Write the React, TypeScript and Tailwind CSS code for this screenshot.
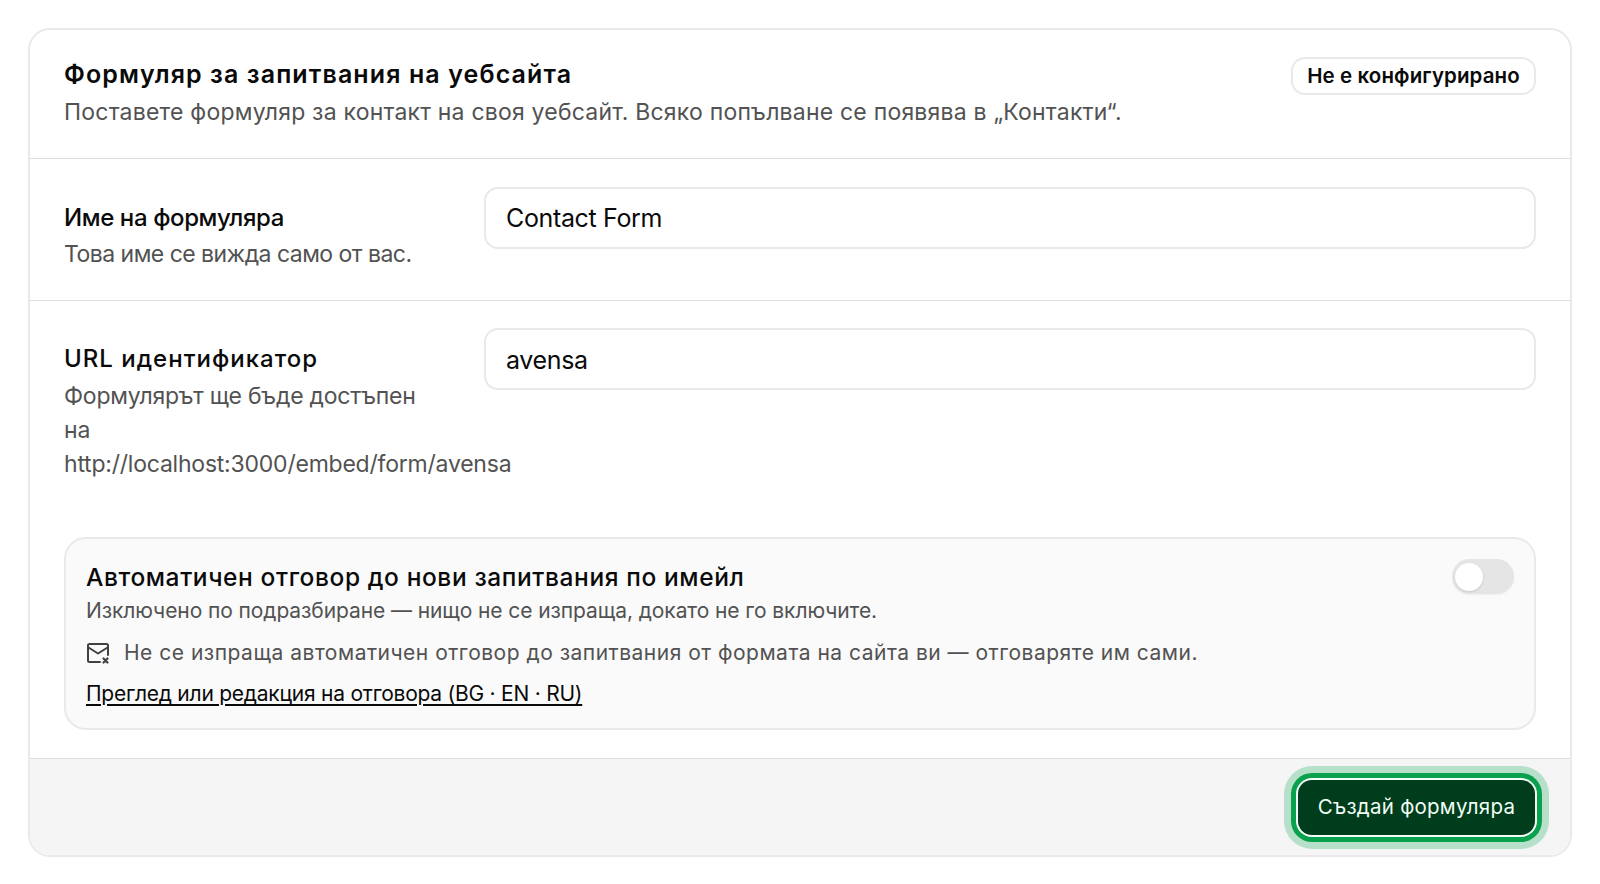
import { useState } from 'react';
import type { ReactNode } from 'react';

type FieldRowProps = {
  label: ReactNode;
  hint: ReactNode;
  children: ReactNode;
};

const inputClass =
  'h-[62px] w-full rounded-[14px] border-2 border-[#e9e9e9] bg-white px-5 text-[25px] tracking-[-0.35px] text-neutral-950 outline-none';

const MailXIcon = () => (
  <svg
    viewBox="0 0 24 24"
    className="h-6 w-6 shrink-0 text-neutral-700"
    fill="none"
    stroke="currentColor"
    strokeWidth="2"
    strokeLinecap="round"
    strokeLinejoin="round"
  >
    <path d="M14 21H3.500A1.500 1.500 0 0 1 2 19.500V4.500A1.500 1.500 0 0 1 3.500 3h17A1.500 1.500 0 0 1 22 4.500V14" />
    <path d="m2.500 6.500 9.500 6 9.500-6" />
    <path d="m17.500 17.500 4 4M21.500 17.500l-4 4" strokeWidth="2.200" />
  </svg>
);

const FieldRow = ({ label, hint, children }: FieldRowProps) => (
  <div className="flex items-start">
    <div className="w-[420px] shrink-0 pt-[13px] whitespace-nowrap">
      <div className="text-[24px] leading-9 font-medium text-neutral-950">{label}</div>
      <div className="mt-px text-[23px] leading-[34px] text-neutral-600">{hint}</div>
    </div>
    <div className="min-w-0 flex-1">{children}</div>
  </div>
);

const App = () => {
  const [name, setName] = useState('Contact Form');
  const [slug, setSlug] = useState('avensa');
  const [autoReply, setAutoReply] = useState(false);

  return (
    <div
      lang="bg"
      className="h-[884px] w-[1600px] overflow-hidden bg-white pt-7 pl-7 font-['Inter',sans-serif] antialiased"
    >
      <div className="flex h-[829px] w-[1544px] flex-col overflow-hidden rounded-[22px] border-2 border-[#e9e9e9] bg-white">
        {/* Header */}
        <div className="flex h-[129px] shrink-0 items-start justify-between border-b border-[#dedede] pt-[26px] pr-[34px] pl-[34px]">
          <div>
            <h2 className="text-[25px] leading-9 font-semibold tracking-[1.1px] text-neutral-950">
              Формуляр за запитвания на уебсайта
            </h2>
            <p className="mt-px text-[23px] leading-[38px] tracking-[0.21px] text-neutral-600">
              Поставете формуляр за контакт на своя уебсайт. Всяко попълване се появява в „Контакти“.
            </p>
          </div>
          <span className="mt-px flex h-[38px] w-[245px] items-center justify-center rounded-[14px] border-2 border-[#e9e9e9] text-[20.5px] font-semibold tracking-[0.1px] whitespace-nowrap text-neutral-950">
            Не е конфигурирано
          </span>
        </div>

        {/* Form name */}
        <div className="h-[142px] shrink-0 border-b border-[#dedede] px-[34px] pt-7">
          <FieldRow
            label={<span className="tracking-[-0.4px]">Име на формуляра</span>}
            hint={<span className="tracking-[-0.53px]">Това име се вижда само от вас.</span>}
          >
            <input className={inputClass} value={name} onChange={(e) => setName(e.target.value)} />
          </FieldRow>
        </div>

        {/* URL slug and auto reply */}
        <div className="h-[458px] shrink-0 border-b border-[#dedede] px-[34px] pt-[27px]">
          <div className="h-[209px]">
            <FieldRow
              label={<span className="tracking-[1px]">URL идентификатор</span>}
              hint={
                <div className="pt-px tracking-[-0.22px]">
                  Формулярът ще бъде достъпен
                  <br />
                  на
                  <br />
                  {`http://localhost:3000/embed/form/${slug}`}
                </div>
              }
            >
              <input className={`${inputClass} pt-0.5`} value={slug} onChange={(e) => setSlug(e.target.value)} />
            </FieldRow>
          </div>

          <div className="flex h-[193px] items-start justify-between rounded-[22px] border-2 border-[#e9e9e9] bg-neutral-50 px-5 pt-5">
            <div>
              <div className="text-[24.5px] leading-9 font-medium tracking-[0.6px] text-neutral-950">
                Автоматичен отговор до нови запитвания по имейл
              </div>
              <p className="text-[21px] leading-8 tracking-[-0.09px] text-neutral-600">
                Изключено по подразбиране — нищо не се изпраща, докато не го включите.
              </p>
              <div className="mt-[10px] flex h-8 items-center gap-[14px] text-[21px] tracking-[0.5px] whitespace-nowrap text-neutral-600">
                <MailXIcon />
                <span>Не се изпраща автоматичен отговор до запитвания от формата на сайта ви — отговаряте им сами.</span>
              </div>
              <a
                href="#reply"
                className="mt-[9px] block w-fit text-[21px] leading-8 tracking-[-0.24px] text-neutral-950 underline decoration-2 underline-offset-[3px]"
              >
                Преглед или редакция на отговора (BG · EN · RU)
              </a>
            </div>
            <button
              type="button"
              role="switch"
              aria-checked={autoReply}
              onClick={() => setAutoReply(!autoReply)}
              className="flex h-[35px] w-[62px] items-center rounded-full bg-[#e5e5e5] px-[3px] shadow-xs"
            >
              <span
                className={
                  autoReply ? 'ml-auto h-7 w-7 rounded-full bg-white shadow-sm' : 'h-7 w-7 rounded-full bg-white shadow-sm'
                }
              />
            </button>
          </div>
        </div>

        {/* Footer */}
        <div className="flex flex-1 items-start justify-end bg-neutral-100 pt-[21px] pr-[35px]">
          <button
            type="button"
            className="h-[55px] w-[237px] rounded-[14px] bg-[#003d1c] text-[20.5px] tracking-[0.25px] whitespace-nowrap text-[#f0fdf4] shadow-[0_0_0_2px_#f4fff8,0_0_0_7px_#0aa14e,0_0_0_14px_#b7e0ca]"
          >
            Създай формуляра
          </button>
        </div>
      </div>
    </div>
  );
};

export default App;
